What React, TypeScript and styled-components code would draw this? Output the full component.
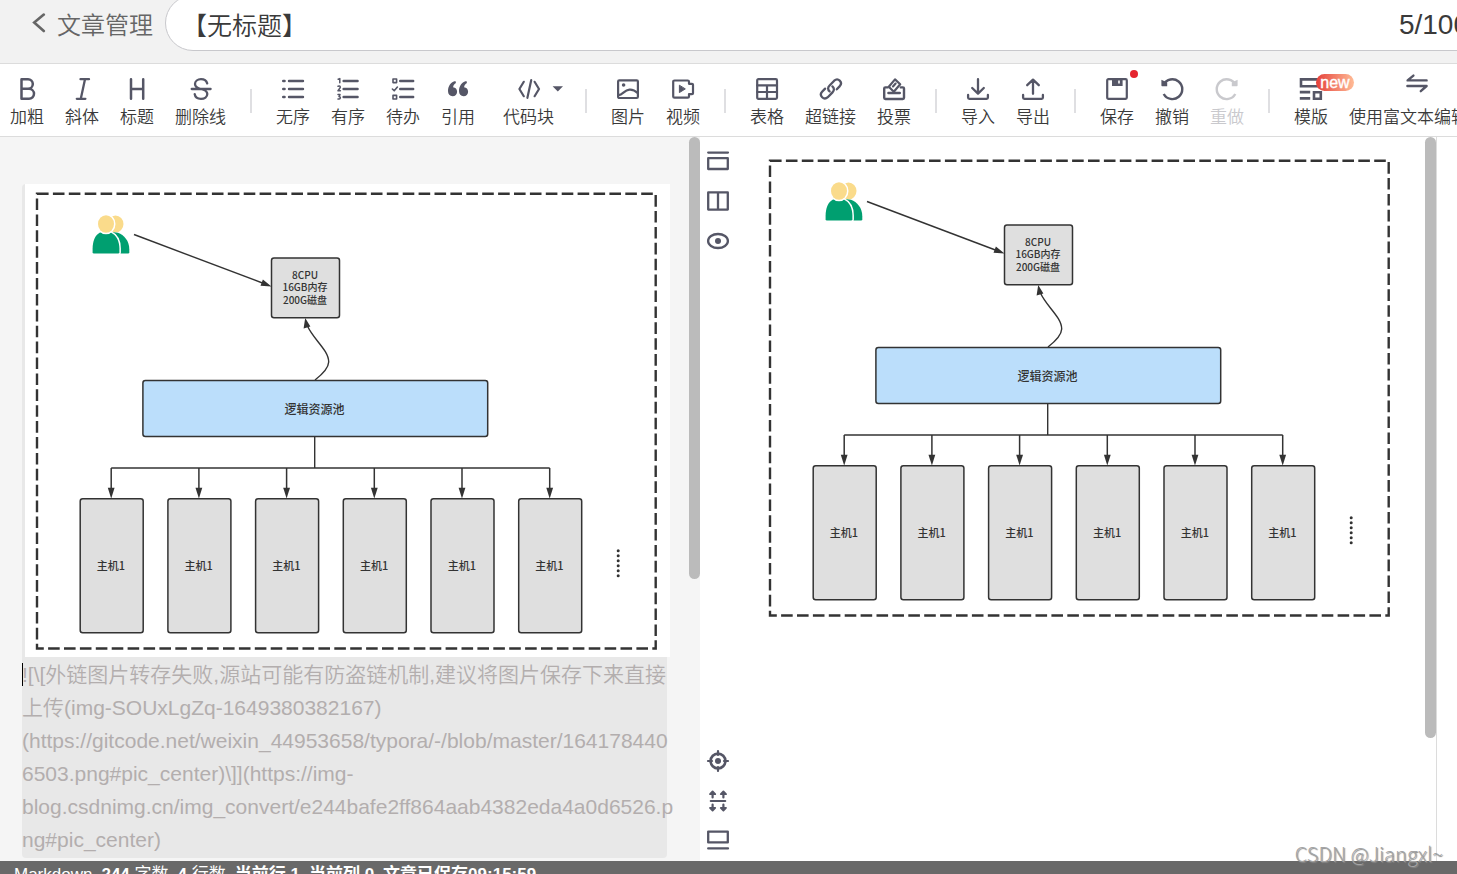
import React, { useState } from "react";
import styled, { createGlobalStyle, css } from "styled-components";

const GlobalStyle = createGlobalStyle`
  *, *::before, *::after { box-sizing: border-box; }
  body {
    margin: 0;
    background: #fff;
    font-family: "Liberation Sans", "Noto Sans CJK SC", sans-serif;
    font-weight: 350;
    color: #3a3a3a;
  }
  button, input, textarea { font: inherit; color: inherit; }
`;

const INK = "#555666";

const Shell = styled.div`
  position: relative;
  height: 100vh;
  overflow: hidden;
  display: flex;
  flex-direction: column;
`;

/* ---------- header ---------- */

const Header = styled.header`
  flex: none;
  display: flex;
  align-items: flex-start;
  height: 63px;
  overflow: hidden;
  padding-left: 31px;
  background: #f2f2f2;
`;

const BackLink = styled.a`
  flex: none;
  display: flex;
  align-items: center;
  gap: 10px;
  height: 46px;
  width: 134px;
  white-space: nowrap;
  font-size: 24px;
  color: #666;
  text-decoration: none;
`;

const TitlePill = styled.div`
  flex: 1;
  display: flex;
  align-items: center;
  height: 56px;
  margin: -5px -40px 0 0;
  padding: 6px 27px 0 16px;
  border: 1px solid #c8c8cc;
  border-radius: 28px;
  background: #fff;
`;

const TitleInput = styled.input`
  flex: 1;
  min-width: 0;
  padding: 0;
  border: 0;
  outline: 0;
  background: none;
  font-size: 25px;
  line-height: 36px;
`;

const Counter = styled.span`
  font-size: 28px;
  line-height: 32px;
  padding-bottom: 2px;
`;

/* ---------- toolbar ---------- */

const Toolbar = styled.div`
  flex: none;
  display: flex;
  gap: 21px;
  height: 74px;
  padding: 13px 0 0 10px;
  overflow: hidden;
  border-top: 1px solid #dcdcdc;
  border-bottom: 1px solid #dcdcdc;
  background: #fff;
`;

const ToolButton = styled.button<{ $wide?: boolean }>`
  position: relative;
  flex: none;
  display: flex;
  flex-direction: column;
  align-items: center;
  gap: 5px;
  height: 53px;
  margin: ${(p) => (p.$wide ? "0 7px" : "0")};
  padding: 0;
  border: 0;
  background: none;
  font-size: 17px;
  line-height: 24px;
  white-space: nowrap;
  &:disabled {
    color: #c9c9cd;
  }
`;

const Divider = styled.span`
  flex: none;
  width: 2px;
  height: 24px;
  margin: 12px 3px 0;
  background: #dfdfe2;
`;

const RedDot = styled.span`
  position: absolute;
  top: -7px;
  right: -4px;
  width: 8px;
  height: 8px;
  border-radius: 50%;
  background: #e5252f;
`;

const NewBadge = styled.span`
  position: absolute;
  top: -3px;
  left: 22px;
  width: 38px;
  height: 17px;
  border-radius: 9px;
  background: linear-gradient(90deg, #e5403a, #ffbb96);
  color: #fff;
  font-size: 16px;
  font-weight: 400;
  line-height: 17px;
  text-align: center;
  -webkit-text-stroke: 0.4px #fff;
`;

const Glyph = styled.svg`
  display: block;
  flex: none;
  width: 24px;
  height: 24px;
  overflow: visible;
  fill: none;
  stroke: currentColor;
  stroke-width: 2.2;
  stroke-linecap: round;
  stroke-linejoin: round;
  color: ${INK};
  button:disabled & {
    color: #c9c9cd;
  }
`;

/* ---------- workspace ---------- */

const Workspace = styled.main`
  flex: 1;
  min-height: 0;
  display: grid;
  grid-template-columns: minmax(0, 700fr) minmax(0, 757fr);
`;

const EditorPane = styled.section`
  display: flex;
  min-height: 0;
  background: #f5f5f5;
`;

const EditorBody = styled.div`
  flex: 1;
  min-width: 0;
  padding: 47px 22px 0;
`;

const Block = styled.div`
  border-radius: 4px;
  background: #e8e8e8;
`;

const EmbeddedPicture = styled.div`
  margin: 0 -3px 0 3px;
  background: #fff;
`;

const Source = styled.p`
  margin: 0;
  padding: 1px 0 2px;
  font-size: 21px;
  line-height: 33px;
  color: #b3aeae;
`;

const SourceLine = styled.span`
  display: block;
  white-space: nowrap;
`;

const Caret = styled.i`
  display: inline-block;
  width: 1px;
  height: 23px;
  margin-right: -1px;
  vertical-align: -4px;
  background: #000;
`;

const thumb = css`
  border-radius: 6px;
  background: #bbb;
`;

const ScrollThumb = styled.div<{ $share: number }>`
  flex: none;
  width: 11px;
  height: ${(p) => p.$share}%;
  ${thumb}
`;

const PreviewPane = styled.section`
  display: flex;
  min-height: 0;
  margin-right: 20px;
  border-right: 1px solid #dcdcdc;
  background: #fff;
`;

const SideTools = styled.div`
  flex: none;
  display: flex;
  flex-direction: column;
  justify-content: space-between;
  width: 36px;
  padding: 12px 0 8px;
`;

const SideGroup = styled.div`
  display: flex;
  flex-direction: column;
  align-items: center;
  gap: 16px;
`;

const SideButton = styled.button`
  padding: 0;
  border: 0;
  background: none;
`;

const PreviewBody = styled.div`
  flex: 1;
  min-width: 0;
  padding: 14px 22px 0;
`;

const Drawing = styled.svg`
  display: block;
  width: 100%;
  height: auto;
  font-family: "Noto Sans CJK SC", sans-serif;
  font-weight: 500;
  fill: #333;
`;

/* ---------- footer ---------- */

const StatusBar = styled.footer`
  flex: none;
  display: flex;
  gap: 9px;
  height: 28px;
  margin-bottom: -15px;
  padding-left: 14px;
  background: #696969;
  color: #fff;
  font-size: 17px;
  font-weight: 400;
  line-height: 28px;
  white-space: pre;
`;

const Watermark = styled.span`
  position: absolute;
  right: 14px;
  bottom: 6px;
  font-family: "Noto Sans CJK SC", sans-serif;
  font-size: 20px;
  font-weight: 300;
  line-height: 28px;
  color: #a4a4a4;
  text-shadow: 1px 1px 1px #888;
`;

/* ---------- icons ---------- */

const icons: Record<string, React.ReactNode> = {
  bold: <path strokeWidth="2.5" d="M6.5 2.2H13a4.8 4.8 0 0 1 0 9.6H6.5ZM6.5 11.8H14a5 5 0 0 1 0 10H6.5Z" />,
  italic: <path strokeWidth="2.3" d="M10.5 2.2H19M6.8 21.8h8.6M15 2.2l-4.2 19.6" />,
  heading: <path strokeWidth="2.5" d="M6 2.2v19.6M18.2 2.2v19.6M6 12h12.2" />,
  strike: (
    <path
      strokeWidth="2.3"
      d="M18.2 6.4C17.4 3.6 15 2.2 12 2.2 8.6 2.2 6 4.2 6 7c0 3 2.6 4.2 6 5 3.8.9 6.3 2 6.3 5 0 2.9-2.7 4.8-6.3 4.8-3.4 0-5.900-1.700-6.300-4.600M2.700 12h18.900"
    />
  ),
  bullets: <path strokeWidth="2.400" d="M2.200 4h1.400M2.200 12h1.400M2.200 20h1.400M8 4h14M8 12h14M8 20h14" />,
  numbers: (
    <>
      <path strokeWidth="2.400" d="M7.600 4h14M7.600 12h14M7.600 20h14" />
      <path strokeWidth="1.500" d="M2.200 2.200l1.600-.6v4.200M2 9.200c2.600-1 2.600 1 1.800 2L2 13.800h2.400M2 17.600h2l-1 2c2.200.2 1.600 2.800-1 2.400" />
    </>
  ),
  tasks: (
    <>
      <path strokeWidth="2.400" d="M9.200 4h13M9.200 12h13M9.200 20h13" />
      <path strokeWidth="1.600" d="M2 2h3.600v3.600H2zM2 18.400h3.600V22H2zM1.400 12l1.800 1.800 3.200-3.800" />
    </>
  ),
  quote: (
    <g fill="currentColor" stroke="none">
      <path d="M9.400 4C4.800 5.200 2 9 2 14c0 3.200 1.800 5.200 4.600 5.200 2.600 0 4.500-1.900 4.500-4.500 0-2.500-1.700-4.300-4-4.400.3-2 1.200-3.300 2.900-4.200z" />
      <path d="M20.400 4C15.800 5.200 13 9 13 14c0 3.200 1.800 5.200 4.600 5.200 2.600 0 4.500-1.900 4.500-4.500 0-2.500-1.700-4.300-4-4.400.3-2 1.200-3.300 2.900-4.200z" />
    </g>
  ),
  code: (
    <>
      <path d="M6.800 4.800L2.400 12l4.400 7.200M17.600 4.800L22 12l-4.400 7.200M14.200 3.200L10.400 20.800" />
      <path fill="currentColor" stroke="none" d="M35.600 9.300h10.400l-5.200 5.200z" />
    </>
  ),
  image: (
    <>
      <rect x="2.100" y="3.400" width="19.800" height="17.600" rx="1.200" />
      <circle cx="7.600" cy="8" r="1.800" fill="currentColor" stroke="none" />
      <path d="M2.500 18.200c4.600-.8 5.600-5 11-5.600 3.600-.3 6 1.400 8.400 3.600" />
    </>
  ),
  video: (
    <>
      <path d="M18 6.800V4.800c0-.8-.5-1.300-1.300-1.300H3.500c-.8 0-1.300.5-1.300 1.300v14.600c0 .8.500 1.300 1.300 1.300h13.200c.8 0 1.300-.5 1.300-1.300v-2.200h3c.7 0 1-.3 1-1V7.800c0-.7-.3-1-1-1z" />
      <path fill="currentColor" strokeWidth="1" d="M8.400 8.600v7l5.600-3.500z" />
    </>
  ),
  table: (
    <>
      <rect x="2.200" y="2.200" width="19.800" height="19.600" rx="1.200" />
      <path d="M2.200 8.400H22M2.200 15H22M12 8.400v13.400" />
    </>
  ),
  link: (
    <path
      strokeWidth="2.300"
      d="M10.600 14.400c-2-1.700-1.900-4 0-5.900L15.200 3.700c3.900-3.400 9 1.500 5.600 5.400l-3 3.200M13.400 9.400c2 1.800 2 4.100.1 6L8.800 20.200c-3.900 3.500-9.200-1.600-5.700-5.400l3-3.200"
    />
  ),
  vote: (
    <>
      <path strokeWidth="2.400" d="M5.600 10.400H3.400c-.8 0-1.200.4-1.200 1.200v9.200c0 .8.400 1.200 1.200 1.200h17.400c.8 0 1.200-.4 1.200-1.200v-9.200c0-.8-.4-1.200-1.200-1.200h-2M6.400 16h11.400" />
      <path strokeWidth="2.200" d="M13 2.400l5.200 4.800-6.400 7.600-5-5zM11 9.400l2.600-2.800" />
    </>
  ),
  import: <path strokeWidth="2.300" d="M2.100 18v2.600c0 .8.400 1.200 1.200 1.200h17.400c.8 0 1.200-.4 1.200-1.200V18M12 2.200v14M6.200 11l5.800 5.600 5.800-5.600" />,
  export: <path strokeWidth="2.300" d="M2.100 18v2.600c0 .8.400 1.200 1.200 1.200h17.400c.8 0 1.200-.4 1.200-1.200V18M12 16.800V3M6.200 8.200L12 2.600l5.800 5.600" />,
  save: (
    <>
      <rect x="2.200" y="2.200" width="19.600" height="19.600" rx="1.200" />
      <path fill="currentColor" stroke="none" d="M7 2h10.600v7H7z" />
      <path stroke="#fff" strokeWidth="1.600" strokeLinecap="butt" d="M14 3.600v3" />
    </>
  ),
  undo: (
    <>
      <path strokeWidth="2.400" strokeLinecap="butt" d="M3.600 7.600A9.900 9.900 0 1 1 3.700 17" />
      <path fill="currentColor" stroke="none" d="M1.400 2.800l5.800 2.600v3.800H2.400c-.6 0-1-.4-1-1z" />
    </>
  ),
  redo: (
    <>
      <path strokeWidth="2.400" strokeLinecap="butt" d="M20.400 7.600A9.900 9.900 0 1 0 20.300 17" />
      <path fill="currentColor" stroke="none" d="M22.600 2.800l-5.800 2.600v3.800h4.800c.6 0 1-.4 1-1z" />
    </>
  ),
  template: (
    <>
      <path strokeWidth="2.600" strokeLinejoin="miter" d="M2 2.400h20v6.800H2zM15 15.200h6.800v6.600H15z" />
      <path strokeWidth="2.800" strokeLinecap="butt" d="M.8 15.200h10.400M.8 21.400h10.400" />
    </>
  ),
  swap: <path strokeWidth="2.400" d="M21.600 3.400H2.600L8.400-1.400M2.400 9h19.200l-5.800 5.200" />,
  layoutTop: <path strokeWidth="2.300" d="M2.200 3.600h19.800M2.200 9.200h19.600v10.800H2.200z" />,
  split: <path strokeWidth="2.300" d="M2.200 3.400h19.600v17.200H2.200zM12 3.400v17.200" />,
  eye: (
    <>
      <ellipse cx="12" cy="12" rx="9.900" ry="7" strokeWidth="2.300" />
      <circle cx="12" cy="12" r="3" fill="currentColor" stroke="none" />
    </>
  ),
  target: (
    <>
      <circle cx="12" cy="12" r="7.400" strokeWidth="2.600" />
      <circle cx="12" cy="12" r="3" fill="currentColor" stroke="none" />
      <path d="M12 2v4M12 18v4M2 12h4M18 12h4" />
    </>
  ),
  sync: (
    <>
      <path strokeWidth="2.200" d="M4.800 12h14.400M6.600 5v3.400M17.400 5v3.400M6.600 15.600V19M17.400 15.600V19" />
      <path
        fill="currentColor"
        strokeWidth="1.800"
        d="M6.600 2.400L4 5.200h5.200zM17.400 2.400l-2.600 2.800H20zM6.600 21.600L4 18.800h5.200zM17.400 21.600l-2.600-2.800H20z"
      />
    </>
  ),
  layoutBottom: <path strokeWidth="2.300" d="M2.200 2.600h19.600v10.800H2.200zM2.200 19.400h19.800" />,
};

function Icon({ name }: { name: string }) {
  return (
    <Glyph viewBox="0 0 24 24" aria-hidden="true">
      {icons[name]}
    </Glyph>
  );
}

type Tool = { icon: string; label: string; wide?: boolean; disabled?: boolean; dot?: boolean; badge?: string };

const toolGroups: Tool[][] = [
  [
    { icon: "bold", label: "加粗" },
    { icon: "italic", label: "斜体" },
    { icon: "heading", label: "标题" },
    { icon: "strike", label: "删除线" },
  ],
  [
    { icon: "bullets", label: "无序" },
    { icon: "numbers", label: "有序" },
    { icon: "tasks", label: "待办" },
    { icon: "quote", label: "引用" },
    { icon: "code", label: "代码块", wide: true },
  ],
  [
    { icon: "image", label: "图片" },
    { icon: "video", label: "视频" },
  ],
  [
    { icon: "table", label: "表格" },
    { icon: "link", label: "超链接" },
    { icon: "vote", label: "投票" },
  ],
  [
    { icon: "import", label: "导入" },
    { icon: "export", label: "导出" },
  ],
  [
    { icon: "save", label: "保存", dot: true },
    { icon: "undo", label: "撤销" },
    { icon: "redo", label: "重做", disabled: true },
  ],
  [
    { icon: "template", label: "模版", badge: "new" },
    { icon: "swap", label: "使用富文本编辑器" },
  ],
];

const HOSTS = [0, 1, 2, 3, 4, 5];
const HOST_PITCH = 87.7;

function Topology() {
  return (
    <Drawing viewBox="0 0 645 473" role="img" aria-label="逻辑资源池">
      <rect x="12" y="9.700" width="618.700" height="454.800" fill="none" stroke="#333" strokeWidth="2.400" strokeDasharray="11.600 4.300" />

      <ellipse cx="90.500" cy="40" rx="8" ry="8.600" fill="#fadb8b" />
      <path d="M84 69.600V49q4-1.500 9-.2c6 2.200 11.300 8 11.300 16.500v3q0 1.300-1.300 1.300z" fill="#009f70" />
      <path
        d="M75 48.600c-5 2.600-7.400 9-7.400 16v3.600q0 1.400 1.400 1.400h24q1.400 0 1.400-1.400v-3.600c0-7-3-13.400-8.600-16z"
        fill="#009f70"
        stroke="#fff"
        strokeWidth="3"
        paintOrder="stroke"
      />
      <ellipse cx="81" cy="40" rx="8" ry="8.800" fill="#fadb8b" stroke="#fff" strokeWidth="3" paintOrder="stroke" />

      <g fill="none" stroke="#333" strokeWidth="1.400">
        <path d="M109 50.500L240 100" />
        <path d="M290 196C299 189 303.500 183 303.700 178 303.700 166 288 155 282.500 142" />
        <path d="M289.700 253V284" />
        <path d={`M86.200 284H${86.200 + HOST_PITCH * 5}`} strokeWidth="1.600" />
      </g>
      <path d="M246.500 102.500L235.500 101.800 237.900 95.600zM280.200 134L278.600 144.500 285.400 142.600z" fill="#333" />

      <g stroke="#333" strokeWidth="1.500">
        <rect x="246.500" y="74" width="68" height="59.800" rx="2.500" fill="#dfdfdf" />
        <rect x="117.900" y="196.400" width="344.800" height="56.200" rx="2.500" fill="#bbdefb" />
      </g>
      <g fontSize="10" textAnchor="middle">
        <text x="280" y="94.500">8CPU</text>
        <text x="280" y="106.800">16GB内存</text>
        <text x="280" y="119.600">200G磁盘</text>
      </g>
      <text x="289.500" y="229.500" fontSize="12" textAnchor="middle">
        逻辑资源池
      </text>

      {HOSTS.map((i) => (
        <g key={i} transform={`translate(${i * HOST_PITCH} 0)`}>
          <path d="M86.200 284V305" fill="none" stroke="#333" strokeWidth="1.500" />
          <path d="M86.200 314.500L82.800 303.800H89.600z" fill="#333" />
          <rect x="55.200" y="314.700" width="63" height="134" rx="2.500" fill="#dfdfdf" stroke="#333" strokeWidth="1.500" />
          <text x="86" y="386" fontSize="11" textAnchor="middle">
            主机1
          </text>
        </g>
      ))}
      {HOSTS.map((i) => (
        <circle key={i} cx="593.200" cy={366.700 + i * 5} r="1.500" />
      ))}
    </Drawing>
  );
}

const sourceLines = [
  "![\\[外链图片转存失败,源站可能有防盗链机制,建议将图片保存下来直接",
  "上传(img-SOUxLgZq-1649380382167)",
  "(https://gitcode.net/weixin_44953658/typora/-/blob/master/164178440",
  "6503.png#pic_center)\\]](https://img-",
  "blog.csdnimg.cn/img_convert/e244bafe2ff864aab4382eda4a0d6526.p",
  "ng#pic_center)",
];

export default function App() {
  const [title, setTitle] = useState("【无标题】");
  return (
    <Shell>
      <GlobalStyle />
      <Header>
        <BackLink href="#articles">
          <svg width="16" height="20" viewBox="0 0 16 20" fill="none" stroke="#666" strokeWidth="2.600" strokeLinecap="round" aria-hidden="true">
            <path d="M12.800 1.600L3.200 9.600l9.600 8.400" />
          </svg>
          文章管理
        </BackLink>
        <TitlePill>
          <TitleInput aria-label="文章标题" value={title} onChange={(e) => setTitle(e.target.value)} />
          <Counter>{title.length}/100</Counter>
        </TitlePill>
      </Header>

      <Toolbar role="toolbar">
        {toolGroups.map((group, g) => (
          <React.Fragment key={g}>
            {g > 0 && <Divider />}
            {group.map((tool) => (
              <ToolButton key={tool.label} type="button" $wide={tool.wide} disabled={tool.disabled}>
                <Icon name={tool.icon} />
                {tool.label}
                {tool.dot && <RedDot />}
                {tool.badge && <NewBadge>{tool.badge}</NewBadge>}
              </ToolButton>
            ))}
          </React.Fragment>
        ))}
      </Toolbar>

      <Workspace>
        <EditorPane>
          <EditorBody>
            <Block>
              <EmbeddedPicture>
                <Topology />
              </EmbeddedPicture>
              <Source>
                {sourceLines.map((line, i) => (
                  <SourceLine key={line}>
                    {i === 0 && <Caret />}
                    {line}
                  </SourceLine>
                ))}
              </Source>
            </Block>
          </EditorBody>
          <ScrollThumb $share={61} />
        </EditorPane>

        <PreviewPane>
          <SideTools>
            <SideGroup>
              {["layoutTop", "split", "eye"].map((name) => (
                <SideButton key={name} type="button" aria-label={name}>
                  <Icon name={name} />
                </SideButton>
              ))}
            </SideGroup>
            <SideGroup>
              {["target", "sync", "layoutBottom"].map((name) => (
                <SideButton key={name} type="button" aria-label={name}>
                  <Icon name={name} />
                </SideButton>
              ))}
            </SideGroup>
          </SideTools>
          <PreviewBody>
            <Topology />
          </PreviewBody>
          <ScrollThumb $share={83} />
        </PreviewPane>
      </Workspace>

      <StatusBar>
        <span>Markdown</span>
        <span>
          <b>244</b> 字数
        </span>
        <span>
          <b>4</b> 行数
        </span>
        <b>当前行 1</b>
        <b>当前列 0</b>
        <b>文章已保存09:15:59</b>
      </StatusBar>
      <Watermark>CSDN @Jiangxl~</Watermark>
    </Shell>
  );
}
